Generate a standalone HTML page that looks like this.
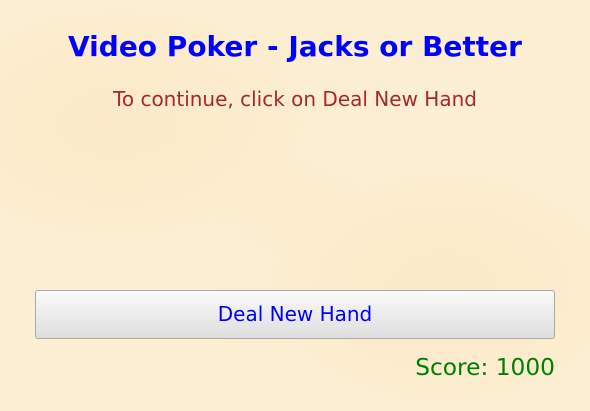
<!DOCTYPE html>
<html><head><style>
html,body{margin:0;padding:0;}
body{width:590px;height:411px;background:#fcefd3;font-family:"DejaVu Sans","Liberation Sans",sans-serif;position:relative;overflow:hidden;
background-image:radial-gradient(ellipse at 20% 30%,rgba(250,225,180,.35),transparent 40%),radial-gradient(ellipse at 75% 70%,rgba(250,225,180,.35),transparent 40%);}
h1{position:absolute;left:0;width:590px;top:31px;margin:0;text-align:center;color:#0000ff;font-size:28px;font-weight:bold;line-height:32px;}
.msg{position:absolute;left:0;width:590px;top:88px;text-align:center;color:#a52a2a;font-size:20px;line-height:23px;}
.btn{position:absolute;left:35px;top:290px;width:518px;height:47px;border:1px solid #a8a8a8;border-radius:3px;background:linear-gradient(#fafafa,#dedede);color:#0000ff;font-size:20px;line-height:47px;text-align:center;}
.score{position:absolute;right:35px;top:353px;color:#008000;font-size:23.3px;line-height:30px;}
</style></head><body>
<h1>Video Poker - Jacks or Better</h1>
<div class="msg">To continue, click on Deal New Hand</div>
<div class="btn">Deal New Hand</div>
<div class="score">Score: 1000</div>
</body></html>
